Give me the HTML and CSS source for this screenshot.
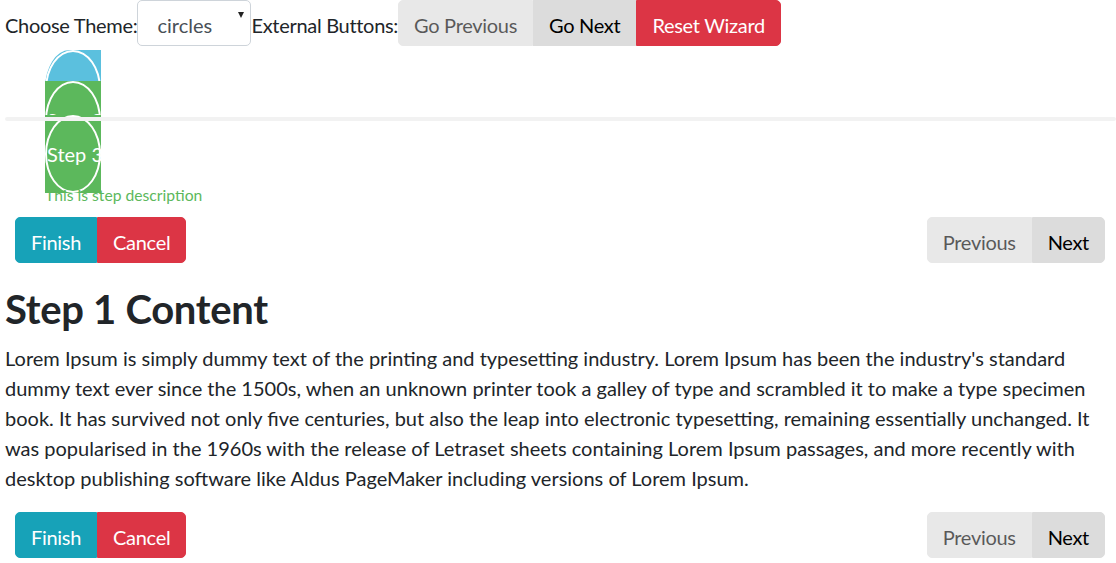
FILE: index.html
```html
<!DOCTYPE html>
<html>
<head>
<meta charset="utf-8">
<link rel="stylesheet" href="styles.css">
</head>
<body>
<div class="page">
  <div class="topbar">
    <label class="lbl">Choose Theme:</label>
    <span class="select-wrap">
      <select class="theme-select"><option>circles</option></select>
    </span>
    <label class="lbl">External Buttons:</label>
    <div class="btn-group">
      <button class="btn btn-grey disabled">Go Previous</button>
      <button class="btn btn-grey">Go Next</button>
      <button class="btn btn-red">Reset Wizard</button>
    </div>
  </div>

  <div class="wizard-nav">
    <div class="steps">
      <a class="step step-done"><span class="step-circle">Step 1</span></a>
      <a class="step step-active s2"><span class="step-circle">Step 2</span></a>
      <a class="step step-active s3"><span class="step-circle">Step 3</span></a>
    </div>
    <div class="step-desc">This is step description</div>
  </div>

  <div class="toolbar">
    <div class="btn-group">
      <button class="btn btn-teal">Finish</button>
      <button class="btn btn-red">Cancel</button>
    </div>
    <div class="btn-group">
      <button class="btn btn-grey disabled">Previous</button>
      <button class="btn btn-grey">Next</button>
    </div>
  </div>

  <div class="content">
    <h2 class="title">Step 1 Content</h2>
    <p class="text">Lorem Ipsum is simply dummy text of the printing and typesetting industry. Lorem Ipsum has been the industry's standard dummy text ever since the 1500s, when an unknown printer took a galley of type and scrambled it to make a type specimen book. It has survived not only five centuries, but also the leap into electronic typesetting, remaining essentially unchanged. It was popularised in the 1960s with the release of Letraset sheets containing Lorem Ipsum passages, and more recently with desktop publishing software like Aldus PageMaker including versions of Lorem Ipsum.</p>
  </div>

  <div class="toolbar">
    <div class="btn-group">
      <button class="btn btn-teal">Finish</button>
      <button class="btn btn-red">Cancel</button>
    </div>
    <div class="btn-group">
      <button class="btn btn-grey disabled">Previous</button>
      <button class="btn btn-grey">Next</button>
    </div>
  </div>
</div>
</body>
</html>
```

FILE: styles.css
```css
* { box-sizing: border-box; }
html, body { margin: 0; padding: 0; background: #fff; }
body {
  font-family: Lato, "Open Sans", sans-serif;
  font-size: 20px;
  line-height: 1.5;
  color: #212529;
}
.page { padding: 0 5px 0 5px; }

.topbar { display: flex; align-items: center; height: 46px; }
.lbl { white-space: nowrap; letter-spacing: -0.3px; padding-top: 4px; }

.select-wrap { position: relative; display: inline-block; }
.theme-select {
  -webkit-appearance: none;
  appearance: none;
  width: 114px;
  height: 46px;
  border: 1px solid #ced4da;
  border-radius: 5px;
  background: #fff;
  color: #495057;
  font-family: inherit;
  font-size: 20px;
  padding: 4px 0 0 19px;
  margin: 0;
}
.select-wrap::after {
  content: "";
  position: absolute;
  right: 7px;
  top: 12px;
  border-left: 3px solid transparent;
  border-right: 3px solid transparent;
  border-top: 6px solid #222;
  pointer-events: none;
}

.btn-group { display: flex; }
.btn {
  font-family: inherit;
  font-size: 20px;
  line-height: 30px;
  padding: 9px 15px 5px 15px;
  height: 46px;
  border: 1px solid transparent;
  border-radius: 0;
  margin: 0;
  color: #000;
  white-space: nowrap;
  letter-spacing: -0.3px;
}
.btn-group .btn:first-child { border-top-left-radius: 5px; border-bottom-left-radius: 5px; }
.btn-group .btn:last-child { border-top-right-radius: 5px; border-bottom-right-radius: 5px; }
.btn-grey { background: #dcdcdc; border-color: #dcdcdc; }
.btn-grey.disabled { opacity: .65; }
.btn-red { background: #dc3545; border-color: #dc3545; color: #fff; }
.btn-teal { background: #17a2b8; border-color: #17a2b8; color: #fff; }

.wizard-nav { position: relative; margin-top: 4px; }
.wizard-nav::before {
  content: "";
  position: absolute;
  left: 0;
  right: -5px;
  top: 67px;
  height: 4px;
  background: #f2f2f2;
  border-radius: 2px;
  z-index: 5;
}
.steps { margin-left: 40px; width: 56px; }
.step {
  display: block;
  position: relative;
  width: 56px;
  height: 78px;
  overflow: hidden;
  color: #fff;
}
.step-done { background: #5bc0de; border-radius: 25px 0 0 25px / 40px 0 0 40px; }
.step-active { background: #5cb85c; }
.s2 { margin-top: -47px; }
.s3 { margin-top: -44px; }
.step-circle {
  display: flex;
  align-items: center;
  width: 56px;
  height: 78px;
  border: 2px solid #fff;
  border-radius: 50%;
  white-space: nowrap;
  padding-left: 0;
  font-size: 20px;
}
.step-desc {
  margin: -9px 0 0 40px;
  font-size: 15.7px;
  line-height: 22px;
  color: #5cb85c;
  position: relative;
}

.toolbar {
  display: flex;
  justify-content: space-between;
  padding: 0 6px 0 10px;
  margin-top: 11px;
}
.content { padding-top: 22px; }
.title {
  font-size: 40px;
  font-weight: 700;
  line-height: 48px;
  letter-spacing: -0.3px;
  margin: 0 0 10px 0;
}
.text { margin: 0 0 19px 0; line-height: 30px; }
.content + .toolbar { margin-top: 0; }
```
